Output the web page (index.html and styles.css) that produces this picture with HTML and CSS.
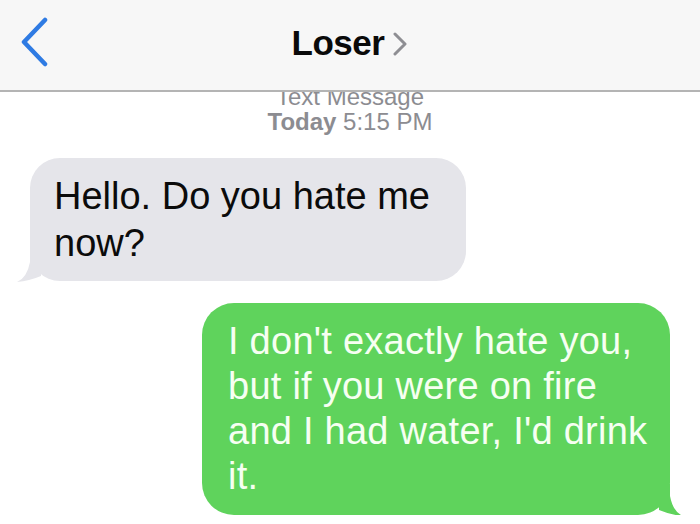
FILE: index.html
```html
<!DOCTYPE html>
<html lang="en">
<head>
    <meta charset="UTF-8" />
    <title>Loser</title>
    <link rel="stylesheet" href="styles.css">
</head>
<body>
    <div class="nav-bar">
        <a class="back" href="#">
            <svg width="30" height="50" viewBox="0 0 30 50">
                <path d="M25 3 L4 25 L25 47" fill="none" stroke="#2f7be3" stroke-width="4.5" stroke-linecap="round" stroke-linejoin="round"/>
            </svg>
        </a>
        <div class="contact">
            <span class="contact-name">Loser</span>
            <svg class="contact-arrow" width="16" height="24" viewBox="0 0 16 24">
                <path d="M3 2 L13 12 L3 22" fill="none" stroke="#8e8e93" stroke-width="3" stroke-linecap="round" stroke-linejoin="round"/>
            </svg>
        </div>
    </div>

    <div class="thread">
        <div class="meta">
            <div>Text Message</div>
            <div><b>Today</b> 5:15 PM</div>
        </div>

        <div class="bubble received">Hello. Do you hate me now?</div>
        <div class="bubble sent">I don't exactly hate you, but if you were on fire and I had water, I'd drink it.</div>
    </div>
</body>
</html>
```

FILE: styles.css
```css
/* Geral */
body {
    margin: 0;
    padding: 0;
    background-color: #fff;
    font-family: "Liberation Sans", Arial, sans-serif;
    overflow: hidden;
}

/* Barra de navegação */
.nav-bar {
    position: relative;
    z-index: 2;
    height: 90px;
    display: flex;
    align-items: center;
    justify-content: center;
    background-color: #f7f7f7;
    border-bottom: 2px solid #b4b4b4;
}

.back {
    position: absolute;
    left: 20px;
    top: 17px;
    display: block;
    line-height: 0;
}

.contact {
    display: flex;
    align-items: center;
    gap: 8px;
    margin-top: -4px;
}

.contact-name {
    font-size: 35px;
    font-weight: bold;
    color: #0a0a0a;
    letter-spacing: -0.5px;
}

.contact-arrow {
    margin-top: 2px;
}

/* Conversa */
.thread {
    display: flex;
    flex-direction: column;
}

.meta {
    margin-top: -8px;
    text-align: center;
    font-size: 24px;
    line-height: 25px;
    color: #8c8c91;
}

.meta b {
    font-weight: bold;
}

.bubble {
    position: relative;
    box-sizing: border-box;
    font-size: 38px;
    border-radius: 30px;
}

.received {
    align-self: flex-start;
    width: 436px;
    margin: 24px 0 0 30px;
    padding: 15px 20px 14px 24px;
    line-height: 47px;
    background-color: #e5e5ea;
    color: #0b0b0b;
}

.sent {
    align-self: flex-end;
    width: 468px;
    margin: 22px 30px 0 0;
    padding: 16px 16px 16px 26px;
    line-height: 45px;
    letter-spacing: 0.25px;
    background-color: #5fd35c;
    color: #f6fff2;
    border-radius: 32px;
}

/* Rabinhos das bolhas */
.received::before,
.sent::before {
    content: "";
    position: absolute;
    bottom: -1px;
    width: 24px;
    height: 32px;
    clip-path: path("M0 32 Q10 28 13 12 L13 0 L24 0 L24 26 Q12 31 0 32 Z");
}

.received::before {
    left: -13px;
    background-color: #e5e5ea;
}

.sent::before {
    right: -13px;
    background-color: #5fd35c;
    transform: scaleX(-1);
}
```
